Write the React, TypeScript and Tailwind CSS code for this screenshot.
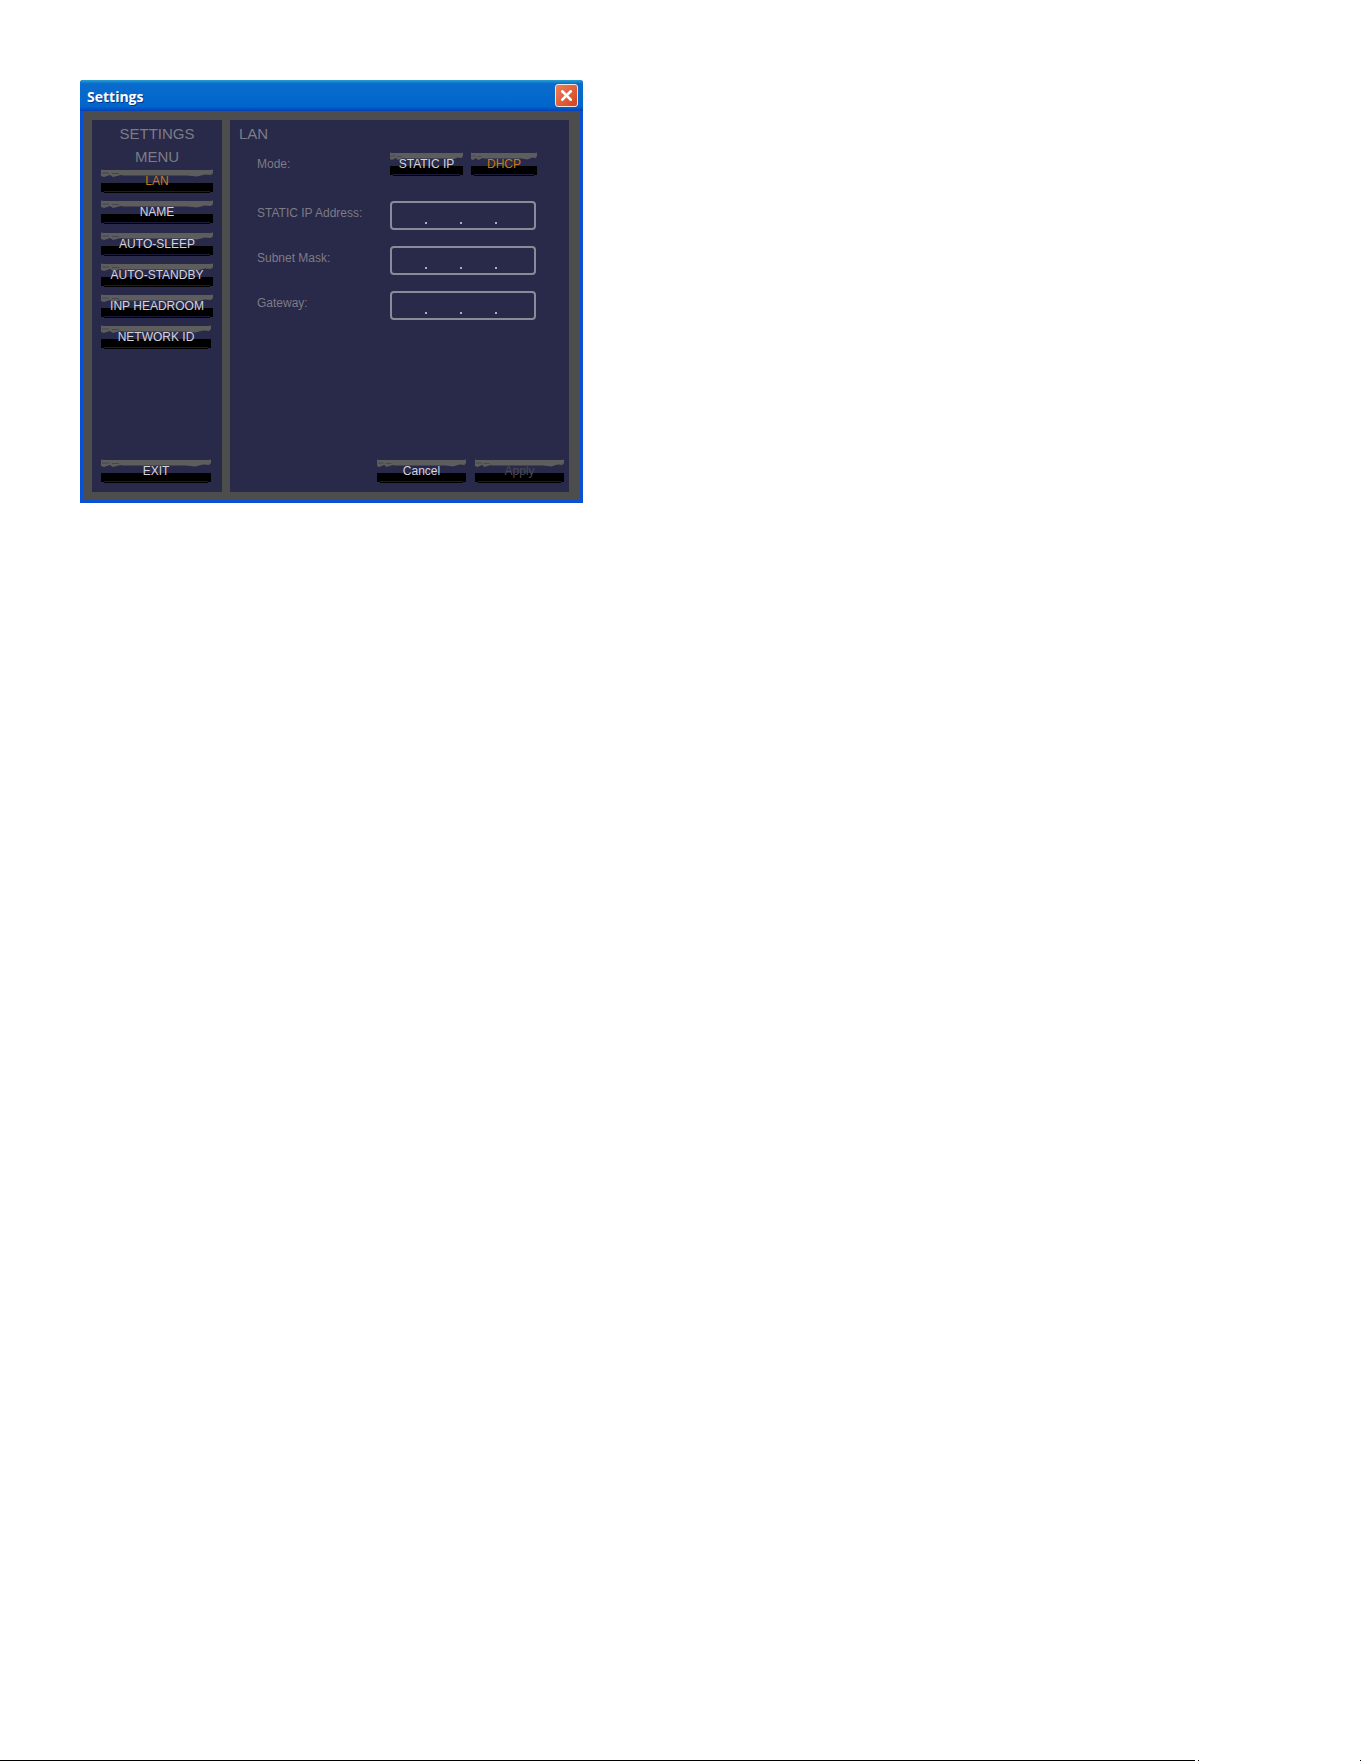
import React from 'react';
import { X } from 'lucide-react';

interface SkinButtonProps {
  label: string;
  width: string;
  color?: string;
}

// the skin's button: worn gray strip on top, black strip below
function SkinButton({ label, width, color = 'text-[#d4d4da]' }: SkinButtonProps) {
  return (
    <div className={`relative h-[24px] shrink-0 ${width}`}>
      <svg className="absolute inset-x-0 top-0 w-full h-[9px]" viewBox="0 0 112 9" preserveAspectRatio="none">
        <path
          d="M0 0.5 L3 1 L109 1 L112 0.5 L112 4 L110 6 L104 5.5 L96 7.5 L86 6.5 L60 6.5 L40 6.5 L22 6.5 L20 6 L12 8 L9 6 L3 8 L0 7 Z"
          fill="#5d5d5d"
        />
        <path d="M1 4 H8 M11 4.5 H18" stroke="#3a3a50" strokeWidth="0.7" />
      </svg>
      <div className="absolute inset-x-0 top-[14px] h-[9px] bg-black" />
      <div className="absolute left-[3px] right-[3px] bottom-0 h-px bg-black" />
      <div className="absolute left-[3px] right-[3px] bottom-[1px] h-px bg-[#1c1c3a]" />
      <div
        className={`absolute inset-0 flex items-center justify-center font-['Liberation_Sans',sans-serif] text-[12px] leading-none ${color}`}
      >
        {label}
      </div>
    </div>
  );
}

function IpField() {
  return (
    <div className="w-[146px] h-[29px] border-2 border-[#8a8a98] rounded-[4px] flex items-end gap-[33px] pl-[33px] pb-[4px]">
      <div className="w-[2px] h-[2px] bg-[#b0b0b8]" />
      <div className="w-[2px] h-[2px] bg-[#b0b0b8]" />
      <div className="w-[2px] h-[2px] bg-[#b0b0b8]" />
    </div>
  );
}

const menuItems = ['NAME', 'AUTO-SLEEP', 'AUTO-STANDBY', 'INP HEADROOM', 'NETWORK ID'];

const ipRows = ['STATIC IP Address:', 'Subnet Mask:', 'Gateway:'];

export default function App() {
  return (
    <div className="min-h-[1761px] bg-white flex flex-col">
      <div className="ml-[80px] mt-[80px] w-[503px] h-[423px] flex flex-col bg-[#0a50d0] rounded-t-[3px] px-[3px] pb-[3px]">
        {/* title bar */}
        <div className="-mx-[3px] h-[31px] shrink-0 flex items-center justify-between pl-[7px] pr-[5px] rounded-t-[3px] bg-[linear-gradient(to_bottom,#2a9ed0_0%,#0a6ccc_12%,#0066cc_85%,#0340b8_100%)]">
          <span className="pt-[1px] font-['Open_Sans',sans-serif] font-bold text-[14px] text-white [text-shadow:1px_1px_0_#003a90]">
            Settings
          </span>
          <div className="w-[23px] h-[23px] flex items-center justify-center rounded-[3px] border border-[#f0e8e0] bg-gradient-to-br from-[#ec8058] to-[#d2401c]">
            <X className="w-[17px] h-[17px] text-white" strokeWidth={3.5} />
          </div>
        </div>

        <div className="flex-1 flex gap-[8px] bg-[#4d4d4d] pt-[9px] pb-[8px] pl-[9px] pr-[11px]">
          {/* left menu */}
          <div className="w-[130px] flex flex-col items-start pl-[9px] pb-[9px] bg-[#292949]">
            <div className="w-[112px] h-[49px] pt-[2px] text-center font-['Liberation_Sans',sans-serif] text-[15px] leading-[23px] text-[#7c7c86]">
              SETTINGS
              <br />
              MENU
            </div>
            <div className="flex flex-col gap-[7.3px]">
              <SkinButton label="LAN" width="w-[112px]" color="text-[#c97a10]" />
              {menuItems.map((item) => (
                <SkinButton key={item} label={item} width={item === 'NETWORK ID' ? 'w-[110px]' : 'w-[112px]'} />
              ))}
            </div>
            <div className="mt-auto">
              <SkinButton label="EXIT" width="w-[110px]" />
            </div>
          </div>

          {/* right panel */}
          <div className="flex-1 flex flex-col bg-[#292949] pb-[9px] pr-[5px]">
            <div className="pl-[9px] pt-[2px] h-[32px] font-['Liberation_Sans',sans-serif] text-[15px] leading-[23px] text-[#7c7c86]">
              LAN
            </div>
            <div className="flex items-center pl-[27px]">
              <div className="w-[133px] pb-[1px] font-['Liberation_Sans',sans-serif] text-[12px] text-[#7c7c86]">Mode:</div>
              <div className="flex gap-[8px]">
                <SkinButton label="STATIC IP" width="w-[73px]" />
                <SkinButton label="DHCP" width="w-[66px]" color="text-[#c97a10]" />
              </div>
            </div>
            <div className="flex flex-col gap-[16px] mt-[25px]">
              {ipRows.map((row) => (
                <div key={row} className="flex items-center pl-[27px]">
                  <div className="w-[133px] pb-[5px] font-['Liberation_Sans',sans-serif] text-[12px] text-[#7c7c86]">{row}</div>
                  <IpField />
                </div>
              ))}
            </div>
            <div className="mt-auto flex justify-end gap-[9px]">
              <SkinButton label="Cancel" width="w-[89px]" />
              <SkinButton label="Apply" width="w-[89px]" color="text-[#4a4a52]" />
            </div>
          </div>
        </div>
      </div>

      {/* stray scan line at the bottom of the page */}
      <div className="mt-auto h-px flex items-center">
        <div className="w-[1195px] h-px bg-black" />
        <div className="ml-[3px] w-px h-px bg-black" />
        <div className="ml-auto w-px h-px bg-black" />
      </div>
    </div>
  );
}
